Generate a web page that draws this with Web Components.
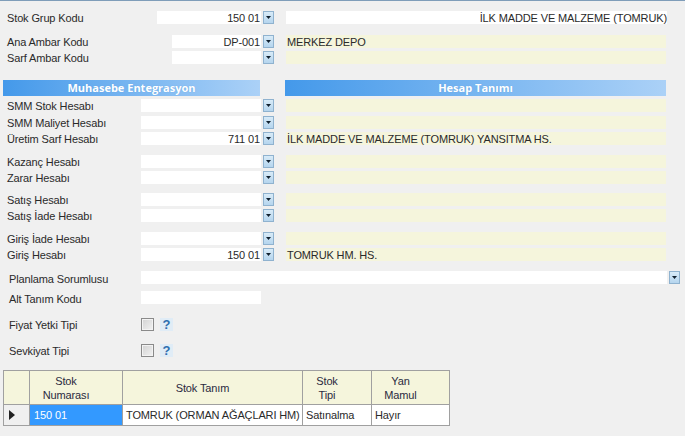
<!DOCTYPE html>
<html>
<head>
<meta charset="utf-8">
<title>Stok Grup</title>
<style>
  html, body { margin: 0; height: 100%; }
  body {
    background: #f0f0f0;
    font: 11px "Liberation Sans", Arial, sans-serif;
    letter-spacing: -0.13px;
    color: #2a2a2a;
    overflow: hidden;
    border-top: 1px solid #7f9db9;
    box-sizing: border-box;
  }
  .form { display: flex; flex-direction: column; }
  .group { display: flex; flex-direction: column; gap: 3px; }
</style>
</head>
<body>
<template id="row-tpl">
  <style>
    :host { display: grid; grid-template-columns: 141px 120px 2px 11px 12px 1fr; grid-template-rows: 13px; height: 13px; line-height: 15px; padding-right: 19px; }
    :host([short]) { grid-template-columns: 157px 104px 2px 11px 12px 1fr; }
    :host([shorter]) { grid-template-columns: 172px 89px 2px 11px 12px 1fr; }
    .lbl { padding-left: 7px; white-space: nowrap; }
    .val { background: #fff; text-align: right; white-space: nowrap; padding-right: 1px; }
    .btn { grid-column: 4; }
    .desc { grid-column: 6; background: #f5f5dc; padding-left: 1px; white-space: nowrap; }
    :host([light]) { padding-right: 18px; }
    :host([light]) .desc { background: #fff; text-align: right; }
  </style>
  <div class="lbl"></div>
  <div class="val"></div>
  <x-drop class="btn"></x-drop>
  <div class="desc"></div>
</template>

<template id="drop-tpl">
  <style>
    :host { display: block; width: 11px; height: 13px; box-sizing: border-box; border: 1px solid #8fb2cf; background: linear-gradient(#d8ebf8, #b5d5ee); position: relative; }
    svg { display: block; position: absolute; left: 2px; top: 4px; }
  </style>
  <svg width="5" height="3" viewBox="0 0 5 3"><path d="M0 0h5L2.5 3z" fill="#10202e"/></svg>
</template>

<template id="head-tpl">
  <style>
    :host { display: grid; grid-template-columns: 257px 25px 381px; height: 16px; margin-left: 3px; }
    div { background: linear-gradient(90deg, #4499ea, #abd1f7); color: #fff; font: bold 11px/16px "Open Sans", sans-serif; letter-spacing: 0; text-align: center; text-shadow: 0 0 1px #5f9fdc; white-space: nowrap; }
    div:first-of-type { grid-column: 1; }
    div:last-of-type { grid-column: 3; }
  </style>
  <div><slot name="left"></slot></div>
  <div><slot name="right"></slot></div>
</template>

<template id="wide-tpl">
  <style>
    :host { display: grid; grid-template-columns: 141px 526px 2px 11px; grid-template-rows: 13px; height: 13px; line-height: 16px; }
    .lbl { padding-left: 9px; white-space: nowrap; }
    .val { background: #fff; }
  </style>
  <div class="lbl"><slot></slot></div>
  <div class="val"></div>
  <span></span>
  <x-drop></x-drop>
</template>

<template id="plain-tpl">
  <style>
    :host { display: grid; grid-template-columns: 141px 120px; grid-template-rows: 13px; height: 13px; line-height: 16px; }
    .lbl { padding-left: 9px; white-space: nowrap; }
    .val { background: #fff; }
  </style>
  <div class="lbl"><slot></slot></div>
  <div class="val"></div>
</template>

<template id="check-tpl">
  <style>
    :host { display: flex; align-items: flex-start; height: 13px; line-height: 15px; }
    .lbl { width: 132px; padding-left: 9px; white-space: nowrap; }
    .box { width: 13px; height: 13px; box-sizing: border-box; border: 1px solid #8a8a8a; background: linear-gradient(135deg, #d2d2d2, #f2f2f2); box-shadow: inset 0 0 0 1px #f3f3f3; }
    .help { margin-left: 6px; width: 13px; height: 13px; background: #e0ecf6; color: #2f6fb0; font: bold 13px/13px "Liberation Sans", sans-serif; text-align: center; }
  </style>
  <div class="lbl"><slot></slot></div>
  <div class="box"></div>
  <div class="help">?</div>
</template>

<template id="grid-tpl">
  <style>
    :host { display: block; width: 447px; margin-left: 3px; box-sizing: border-box; border: 1px solid #a0a0a0; }
    .t { display: grid; grid-template-columns: 26px 93px 180px 69px 1fr; grid-template-rows: 34px 20px; }
    .h, .c { box-sizing: border-box; border-right: 1px solid #a0a0a0; display: flex; align-items: center; white-space: nowrap; }
    .h { background: #f5f5dc; border-bottom: 1px solid #a0a0a0; justify-content: center; text-align: center; line-height: 14px; color: #2a2a40; padding-right: 20px; }
    .c { background: #fff; padding-left: 3px; }
    .h:nth-child(5), .c:last-child { border-right: 0; }
    .c.mark { background: #f0f0f0; padding-left: 5px; }
    .c.sel { background: #3399ff; color: #fff; padding-left: 4px; }
    svg { display: block; }
  </style>
  <div class="t">
    <div class="h"></div>
    <div class="h">Stok<br>Numarası</div>
    <div class="h">Stok Tanım</div>
    <div class="h">Stok<br>Tipi</div>
    <div class="h">Yan<br>Mamul</div>
    <div class="c mark"><svg width="6" height="10" viewBox="0 0 6 10"><path d="M0 0l6 5-6 5z" fill="#222"/></svg></div>
    <div class="c sel">150 01</div>
    <div class="c">TOMRUK (ORMAN AĞAÇLARI HM)</div>
    <div class="c">Satınalma</div>
    <div class="c">Hayır</div>
  </div>
</template>

<div class="form">
  <x-row short light label="Stok Grup Kodu" value="150 01" desc="İLK MADDE VE MALZEME (TOMRUK)" style="margin-top:10px"></x-row>
  <div class="group" style="margin-top:11px">
    <x-row shorter label="Ana Ambar Kodu" value="DP-001" desc="MERKEZ DEPO"></x-row>
    <x-row shorter label="Sarf Ambar Kodu"></x-row>
  </div>
  <x-head style="margin-top:16px"><span slot="left">Muhasebe Entegrasyon</span><span slot="right">Hesap Tanımı</span></x-head>
  <div class="group" style="margin-top:3px;gap:3.5px">
    <x-row label="SMM Stok Hesabı"></x-row>
    <x-row label="SMM Maliyet Hesabı"></x-row>
    <x-row label="Üretim Sarf Hesabı" value="711 01" desc="İLK MADDE VE MALZEME (TOMRUK) YANSITMA HS."></x-row>
  </div>
  <div class="group" style="margin-top:10px">
    <x-row label="Kazanç Hesabı"></x-row>
    <x-row label="Zarar Hesabı"></x-row>
  </div>
  <div class="group" style="margin-top:9px">
    <x-row label="Satış Hesabı"></x-row>
    <x-row label="Satış İade Hesabı"></x-row>
  </div>
  <div class="group" style="margin-top:10px">
    <x-row label="Giriş İade Hesabı"></x-row>
    <x-row label="Giriş Hesabı" value="150 01" desc="TOMRUK HM. HS."></x-row>
  </div>
  <x-wide style="margin-top:10px">Planlama Sorumlusu</x-wide>
  <x-plain style="margin-top:7px">Alt Tanım Kodu</x-plain>
  <x-check style="margin-top:14px">Fiyat Yetki Tipi</x-check>
  <x-check style="margin-top:13px">Sevkiyat Tipi</x-check>
  <x-grid style="margin-top:13px"></x-grid>
</div>

<script>
  function stamp(el, id) {
    el.attachShadow({ mode: "open" }).appendChild(document.getElementById(id).content.cloneNode(true));
  }

  class XDrop extends HTMLElement {
    constructor() { super(); stamp(this, "drop-tpl"); }
  }
  customElements.define("x-drop", XDrop);

  class XRow extends HTMLElement {
    constructor() { super(); stamp(this, "row-tpl"); }
    connectedCallback() {
      const root = this.shadowRoot;
      root.querySelector(".lbl").textContent = this.getAttribute("label") || "";
      root.querySelector(".val").textContent = this.getAttribute("value") || "";
      root.querySelector(".desc").textContent = this.getAttribute("desc") || "";
    }
  }
  customElements.define("x-row", XRow);

  class XHead extends HTMLElement {
    constructor() { super(); stamp(this, "head-tpl"); }
  }
  customElements.define("x-head", XHead);

  class XWide extends HTMLElement {
    constructor() { super(); stamp(this, "wide-tpl"); }
  }
  customElements.define("x-wide", XWide);

  class XPlain extends HTMLElement {
    constructor() { super(); stamp(this, "plain-tpl"); }
  }
  customElements.define("x-plain", XPlain);

  class XCheck extends HTMLElement {
    constructor() { super(); stamp(this, "check-tpl"); }
  }
  customElements.define("x-check", XCheck);

  class XGrid extends HTMLElement {
    constructor() { super(); stamp(this, "grid-tpl"); }
  }
  customElements.define("x-grid", XGrid);
</script>
</body>
</html>
